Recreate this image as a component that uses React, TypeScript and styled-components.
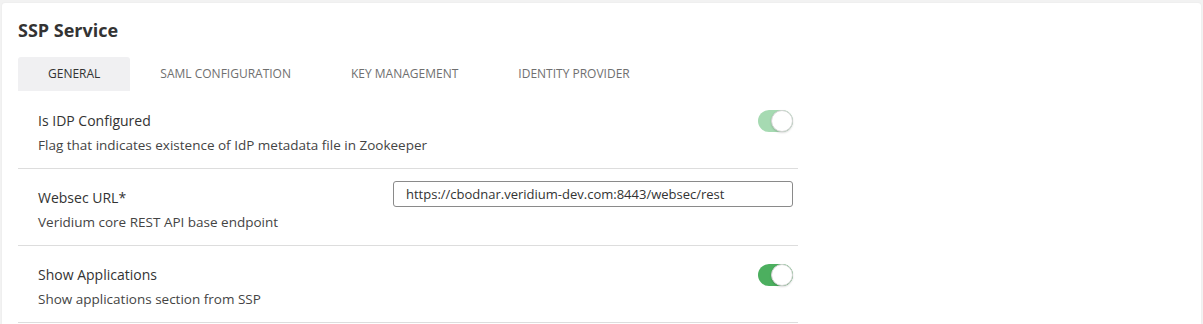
import { useState } from "react";
import styled, { createGlobalStyle } from "styled-components";

const GlobalStyle = createGlobalStyle`
    html, body {
        margin: 0;
        padding: 0;
        background-color: #f2f2f2;
        font-family: "Open Sans", "Noto Sans", sans-serif;
    }
`;

const Page = styled.div`
    padding: 3px 2px 0 2px;
    height: 324px;
    box-sizing: border-box;
`;

const Card = styled.div`
    background-color: #ffffff;
    border-radius: 3px 3px 0 0;
    box-shadow: 0 0 2px rgba(0, 0, 0, 0.06);
    padding: 14px 16px 0 16px;
    height: 100%;
    box-sizing: border-box;
`;

const Title = styled.h2`
    margin: 0;
    font-size: 18px;
    line-height: 26px;
    font-weight: 700;
    color: #333333;
`;

const Tabs = styled.div`
    display: flex;
    margin-top: 14px;
`;

const Tab = styled.button<{ $active?: boolean }>`
    border: 0;
    border-radius: 3px 3px 0 0;
    padding: 0 30px 1px 30px;
    height: 34px;
    font-family: inherit;
    font-size: 12px;
    text-transform: uppercase;
    color: ${(p) => (p.$active ? "#333333" : "#6f6f6f")};
    background-color: ${(p) => (p.$active ? "#f0f0f2" : "transparent")};
    cursor: pointer;
`;

const Settings = styled.div`
    width: 780px;
    padding-top: 1px;
`;

const Row = styled.div`
    display: flex;
    justify-content: space-between;
    align-items: flex-start;
    padding: 19px 5px 13px 20px;
    border-bottom: 1px solid #dddddd;
`;

const Info = styled.div`
    display: flex;
    flex-direction: column;
    gap: 4px;
`;

const Label = styled.span`
    font-size: 14px;
    line-height: 20px;
    color: #333333;
`;

const Description = styled.span`
    font-size: 13.5px;
    line-height: 20px;
    color: #444444;
`;

const Input = styled.input`
    width: 400px;
    height: 26px;
    box-sizing: border-box;
    margin-top: -7px;
    padding: 0 12px;
    border: 1px solid #8a8a8a;
    border-radius: 3px;
    font-family: inherit;
    font-size: 13px;
    color: #333333;
    outline: none;
`;

const Switch = styled.button<{ $on: boolean; $muted?: boolean }>`
    position: relative;
    width: 35px;
    height: 22px;
    margin-top: -1px;
    border: 0;
    padding: 0;
    border-radius: 11px;
    cursor: pointer;
    background-color: ${(p) =>
        !p.$on ? "#e4e4e4" : p.$muted ? "#a6dab2" : "#4caf5f"};

    &::after {
        content: "";
        position: absolute;
        top: 0;
        left: ${(p) => (p.$on ? "13px" : "0")};
        width: 20px;
        height: 20px;
        border-radius: 50%;
        background-color: #ffffff;
        border: 1px solid #d4d4d4;
        box-shadow: 0 1px 2px rgba(0, 0, 0, 0.15);
    }
`;

const tabs = ["General", "SAML Configuration", "Key Management", "Identity Provider"];

export default function App() {
    const [activeTab, setActiveTab] = useState(0);
    const [showApps, setShowApps] = useState(true);
    const [websecUrl, setWebsecUrl] = useState(
        "https://cbodnar.veridium-dev.com:8443/websec/rest"
    );

    return (
        <>
            <GlobalStyle />
            <Page>
                <Card>
                    <Title>SSP Service</Title>
                    <Tabs>
                        {tabs.map((t, i) => (
                            <Tab
                                key={t}
                                $active={i === activeTab}
                                onClick={() => setActiveTab(i)}
                            >
                                {t}
                            </Tab>
                        ))}
                    </Tabs>
                    <Settings>
                        <Row>
                            <Info>
                                <Label>Is IDP Configured</Label>
                                <Description>
                                    Flag that indicates existence of IdP metadata file in Zookeeper
                                </Description>
                            </Info>
                            <Switch $on $muted disabled />
                        </Row>
                        <Row>
                            <Info>
                                <Label>Websec URL*</Label>
                                <Description>Veridium core REST API base endpoint</Description>
                            </Info>
                            <Input
                                value={websecUrl}
                                onChange={(e) => setWebsecUrl(e.target.value)}
                            />
                        </Row>
                        <Row>
                            <Info>
                                <Label>Show Applications</Label>
                                <Description>Show applications section from SSP</Description>
                            </Info>
                            <Switch $on={showApps} onClick={() => setShowApps(!showApps)} />
                        </Row>
                    </Settings>
                </Card>
            </Page>
        </>
    );
}
